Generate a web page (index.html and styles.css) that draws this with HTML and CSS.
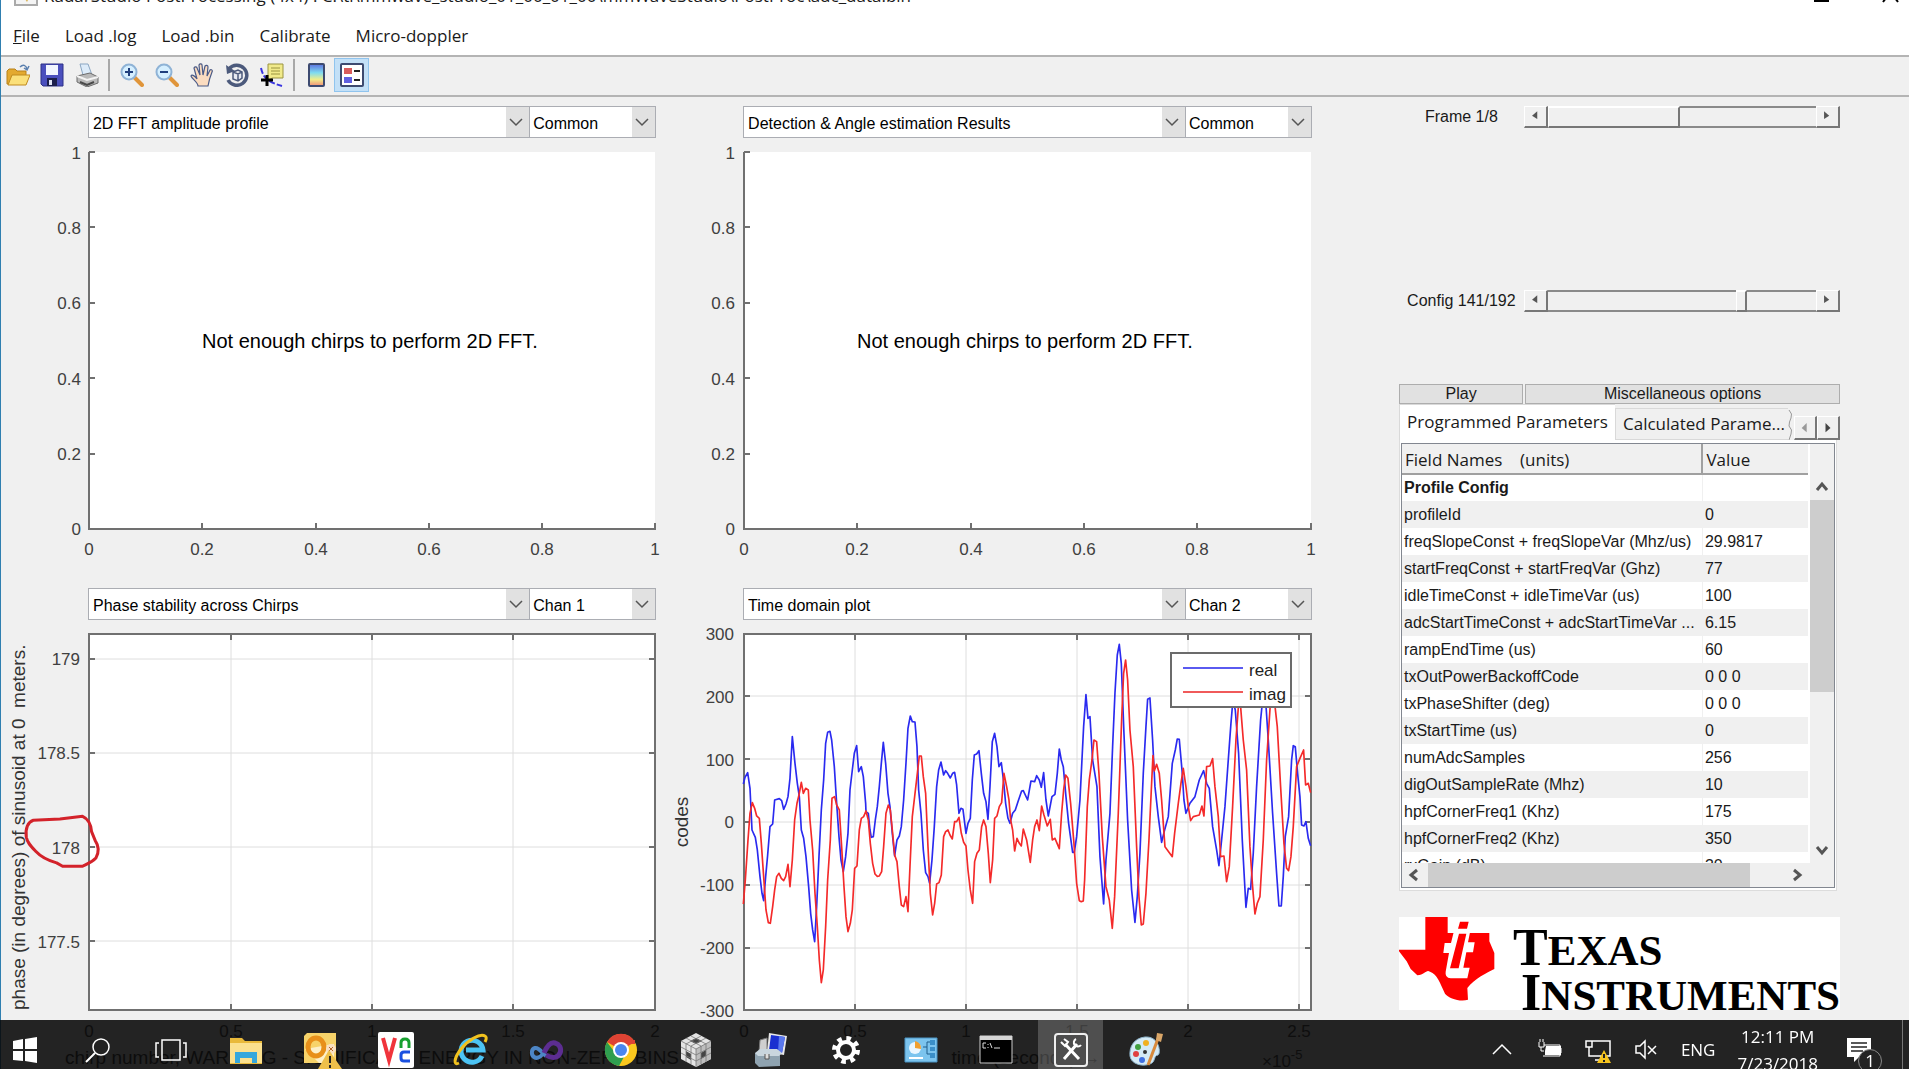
FILE: index.html
```html
<!DOCTYPE html>
<html lang="en">
<head>
<meta charset="utf-8">
<title>RadarStudio PostProcessing</title>
<link rel="stylesheet" href="styles.css">
</head>
<body>
<div class="app">
  <header class="titlebar">
    <svg class="app-icon" viewBox="0 0 24 24"><rect x="1" y="1" width="22" height="22" fill="#f4f4f4" stroke="#aaa" stroke-width="2"/><path d="M9 14l4 6 3-6z" fill="#d9b45a"/></svg>
    <span class="title">RadarStudio PostProcessing (4x4) : C:\ti\mmwave_studio_01_00_01_00\mmWaveStudio\PostProc\adc_data.bin</span>
    <svg class="win-buttons" viewBox="0 0 90 8"><path d="M3 3h15" stroke="#000" stroke-width="2"/><path d="M72 4l3-4M87 4l-3-4" stroke="#000" stroke-width="2"/></svg>
  </header>

  <nav class="menubar">
    <button><u>F</u>ile</button>
    <button>Load .log</button>
    <button>Load .bin</button>
    <button>Calibrate</button>
    <button>Micro-doppler</button>
  </nav>

  <div class="toolbar">
    <button aria-label="Open"><svg viewBox="0 0 24 24"><path d="M1 21V8l2-2h6l2 2h9v13z" fill="#e3a92f" stroke="#b8811a"/><path d="M2 22L6 12h18l-4 10z" fill="#fbe07a" stroke="#c08a1e"/><path d="M14 4c3-3 6-2 7 2m-3-1l3 2 2-4" fill="none" stroke="#5a7fae" stroke-width="1.500"/></svg></button>
    <button aria-label="Save"><svg viewBox="0 0 24 24"><path d="M1 1h22v22H3l-2-2z" fill="#4a4fbd" stroke="#2d3186"/><path d="M6 2h12v10H6z" fill="#f2f6ff"/><path d="M7 15h10v8H7z" fill="#1c1f4c"/><path d="M9 17h3v5H9z" fill="#dfe3f4"/></svg></button>
    <button aria-label="Print"><svg viewBox="0 0 24 24"><path d="M5 1h8l4 11H8z" fill="#dcebf9" stroke="#8ba6c2"/><path d="M2 13l13-3 8 4v6l-11 4-10-5z" fill="#b9b9b9" stroke="#6c6c6c"/><path d="M2 13l10 4 11-3" fill="none" stroke="#f3f3f3" stroke-width="2"/><path d="M5 19l7 3 7-3" fill="none" stroke="#4a4a4a" stroke-width="2"/></svg></button>
    <span class="sep"></span>
    <button aria-label="Zoom in"><svg viewBox="0 0 24 24"><path d="M14 14l8 8" stroke="#e0953a" stroke-width="4" stroke-linecap="round"/><circle cx="9" cy="9" r="7.500" fill="#d5efff" stroke="#8fb3d6" stroke-width="2"/><path d="M9 5v8M5 9h8" stroke="#1f3f7d" stroke-width="2"/></svg></button>
    <button aria-label="Zoom out"><svg viewBox="0 0 24 24"><path d="M14 14l8 8" stroke="#e0953a" stroke-width="4" stroke-linecap="round"/><circle cx="9" cy="9" r="7.500" fill="#d5efff" stroke="#8fb3d6" stroke-width="2"/><path d="M5 9h8" stroke="#1f3f7d" stroke-width="2"/></svg></button>
    <button aria-label="Pan"><svg viewBox="0 0 24 24"><path d="M8 23c0-4-6-7-7-10 1-2 4 0 6 3L4 5c1-2 3-1 3 0l3 7-1-10c1-2 3-1 3 0l1 10 2-9c1-1 3-1 3 1l-1 9 3-6c1-1 3 0 2 2-2 5-3 8-4 14z" fill="#fbdcc0" stroke="#4a5a86" stroke-width="1.200"/></svg></button>
    <button aria-label="Rotate"><svg viewBox="0 0 24 24"><path d="M4 6a10 10 0 1 1-1 11" fill="none" stroke="#4c5a7c" stroke-width="3.500"/><path d="M1 2l1 9 8-3z" fill="#4c5a7c"/><path d="M8 9l5-2 4 2v6l-4 3-5-2zM8 9l5 2 4-2M13 11v6" fill="#e7eaf2" stroke="#4c5a7c" stroke-width="1.500"/></svg></button>
    <button aria-label="Data cursor"><svg viewBox="0 0 24 24"><path d="M1 5c2 9 6 14 21 18" fill="none" stroke="#3a35e0" stroke-width="2" stroke-dasharray="6 2"/><path d="M8 1h15v14H12l-4 3z" fill="#f1ea8a" stroke="#9a9440"/><path d="M11 5h9M11 8h9M11 11h9" stroke="#9a9440"/><path d="M7 12v11M1 17h12" stroke="#000" stroke-width="3"/></svg></button>
    <span class="sep"></span>
    <button aria-label="Colorbar"><svg viewBox="0 0 24 24"><defs><linearGradient id="cb" x2="0" y2="1"><stop offset="0" stop-color="#5c6fe0"/><stop offset=".4" stop-color="#7fdcf0"/><stop offset=".7" stop-color="#f0ee8a"/><stop offset="1" stop-color="#f08c78"/></linearGradient></defs><rect x="4" y="1" width="15" height="22" rx="1" fill="url(#cb)" stroke="#3d4a70" stroke-width="2"/></svg></button>
    <button class="active" aria-label="Legend"><svg viewBox="0 0 24 24"><rect x="1" y="1" width="22" height="22" rx="1" fill="#fff" stroke="#3d4a70" stroke-width="2"/><path d="M4 5h8v6H4z" fill="#d95c5c"/><path d="M4 14h8v6H4z" fill="#6060e0"/><path d="M14 8h6M14 17h6" stroke="#222" stroke-width="2"/></svg></button>
  </div>

  <main class="main">
    <section class="panel">
      <div class="picker">
        <select class="plot" aria-label="Plot 1"><option>2D FFT amplitude profile</option></select>
        <select class="chan" aria-label="Plot 1 channel"><option>Common</option></select>
      </div>
      <svg class="chart" viewBox="1 138 655 450">
        <rect x="89" y="152" width="566" height="377" fill="#fff"/>
        <path class="axis" d="M89 152V529H656M89 152h6M89 227h6M89 303h6M89 378h6M89 454h6M202 529v-6M316 529v-6M429 529v-6M542 529v-6M655 529v-6"/>
        <g class="tick end"><text x="81" y="159">1</text><text x="81" y="234">0.8</text><text x="81" y="309">0.6</text><text x="81" y="385">0.4</text><text x="81" y="460">0.2</text><text x="81" y="535">0</text></g>
        <g class="tick mid"><text x="89" y="555">0</text><text x="202" y="555">0.2</text><text x="316" y="555">0.4</text><text x="429" y="555">0.6</text><text x="542" y="555">0.8</text><text x="655" y="555">1</text></g>
        <text class="note" x="202" y="348">Not enough chirps to perform 2D FFT.</text>
      </svg>
      <div class="picker">
        <select class="plot" aria-label="Plot 3"><option>Phase stability across Chirps</option></select>
        <select class="chan" aria-label="Plot 3 channel"><option>Chan 1</option></select>
      </div>
      <svg class="chart" viewBox="1 620 655 450">
        <rect x="89" y="633" width="566" height="377" fill="#fff"/>
        <path class="gridline" d="M231 633V1010M372 633V1010M513 633V1010M89 659H655M89 753H655M89 847H655M89 941H655"/>
        <path class="axis" d="M89 634H655V1010H89ZM231 634v6M372 634v6M513 634v6M231 1010v-6M372 1010v-6M513 1010v-6M89 659h6M89 753h6M89 847h6M89 941h6M655 659h-6M655 753h-6M655 847h-6M655 941h-6"/>
        <g class="tick end"><text x="80" y="665">179</text><text x="80" y="759">178.5</text><text x="80" y="854">178</text><text x="80" y="948">177.5</text></g>
        <g class="tick mid"><text x="89" y="1037">0</text><text x="231" y="1037">0.5</text><text x="372" y="1037">1</text><text x="513" y="1037">1.5</text><text x="655" y="1037">2</text></g>
        <text class="label mid" x="372" y="1064">chirp number, WARNING - SIGNIFICANT ENERGY IN NON-ZERO BINS</text>
        <text class="label" transform="translate(25 1010) rotate(-90)" xml:space="preserve">phase (in degrees) of sinusoid at 0  meters.</text>
        <g transform="translate(0 780) scale(.333)"><path d="M79 172C75 145 84 126 100 121L180 117L248 109C264 116 273 130 275 155L286 182C298 200 297 218 288 234C275 248 262 252 248 259H188L170 249C140 241 120 228 108 215C92 198 82 188 79 172Z" fill="none" stroke="#d3222a" stroke-width="9" stroke-linejoin="round"/></g>
      </svg>
    </section>

    <section class="panel">
      <div class="picker">
        <select class="plot" aria-label="Plot 2"><option>Detection &amp; Angle estimation Results</option></select>
        <select class="chan" aria-label="Plot 2 channel"><option>Common</option></select>
      </div>
      <svg class="chart" viewBox="656 138 656 450">
        <rect x="744" y="152" width="567" height="377" fill="#fff"/>
        <path class="axis" d="M744 152V529H1312M744 152h6M744 227h6M744 303h6M744 378h6M744 454h6M857 529v-6M971 529v-6M1084 529v-6M1197 529v-6M1311 529v-6"/>
        <g class="tick end"><text x="735" y="159">1</text><text x="735" y="234">0.8</text><text x="735" y="309">0.6</text><text x="735" y="385">0.4</text><text x="735" y="460">0.2</text><text x="735" y="535">0</text></g>
        <g class="tick mid"><text x="744" y="555">0</text><text x="857" y="555">0.2</text><text x="971" y="555">0.4</text><text x="1084" y="555">0.6</text><text x="1197" y="555">0.8</text><text x="1311" y="555">1</text></g>
        <text class="note" x="857" y="348">Not enough chirps to perform 2D FFT.</text>
      </svg>
      <div class="picker">
        <select class="plot" aria-label="Plot 4"><option>Time domain plot</option></select>
        <select class="chan" aria-label="Plot 4 channel"><option>Chan 2</option></select>
      </div>
      <svg class="chart" viewBox="656 620 656 450">
        <rect x="744" y="633" width="567" height="377" fill="#fff"/>
        <path class="gridline" d="M855 633V1010M966 633V1010M1077 633V1010M1188 633V1010M1299 633V1010M744 696H1311M744 759H1311M744 822H1311M744 885H1311M744 948H1311"/>
        <path class="axis" d="M744 634H1311V1010H744ZM855 634v6M966 634v6M1077 634v6M1188 634v6M1299 634v6M855 1010v-6M966 1010v-6M1077 1010v-6M1188 1010v-6M1299 1010v-6M744 696h6M744 759h6M744 822h6M744 885h6M744 948h6M1311 696h-6M1311 759h-6M1311 822h-6M1311 885h-6M1311 948h-6"/>
        <g transform="translate(660 600) scale(.3333)" fill="none" stroke-width="5" stroke-linejoin="round">
          <polyline stroke="#2a2af0" points="250,552 255,532 263,518 270,565 276,690 286,712 292,750 300,830 306,880 311,902 317,830 323,765 330,680 338,672 344,600 358,596 365,602 371,628 378,612 384,590 390,535 397,410 405,490 412,550 418,590 424,690 431,715 438,770 446,860 452,940 458,990 464,1025 470,920 477,770 484,630 491,540 497,430 503,397 510,394 515,420 523,500 530,610 537,710 543,780 550,815 557,770 564,700 570,570 577,510 583,460 590,437 596,515 604,500 610,530 617,610 618,635 625,640 630,690 634,712 640,710 646,660 652,620 658,560 664,490 670,427 677,490 684,580 690,620 697,700 704,768 711,720 718,708 724,680 731,600 738,490 744,385 751,348 757,365 765,366 771,440 776,570 783,640 790,750 797,818 804,830 809,850 816,780 823,680 830,560 836,510 843,486 851,525 857,512 863,520 871,534 878,520 884,517 890,555 897,640 903,625 909,628 918,700 924,670 931,655 937,540 943,465 950,462 957,452 964,520 971,580 978,605 984,658 990,560 997,425 1004,400 1011,440 1017,500 1024,488 1031,545 1037,610 1044,655 1050,670 1058,640 1066,630 1074,605 1085,573 1090,572 1103,600 1113,543 1124,545 1130,527 1138,540 1144,562 1151,518 1158,600 1165,648 1176,590 1185,583 1192,520 1198,447 1204,480 1210,500 1218,590 1226,670 1238,757 1243,757 1250,710 1260,600 1265,500 1271,380 1278,284 1284,355 1290,350 1298,480 1311,560 1320,770 1331,912 1338,780 1350,640 1358,440 1365,280 1372,165 1378,133 1384,190 1392,400 1403,660 1415,870 1425,967 1432,890 1440,760 1450,520 1458,380 1463,298 1470,294 1478,420 1485,560 1495,650 1505,727 1514,690 1525,650 1537,490 1546,450 1552,417 1558,418 1567,520 1572,600 1578,640 1590,610 1605,590 1618,540 1631,512 1640,550 1648,565 1658,680 1670,750 1677,797 1685,720 1695,620 1705,480 1713,370 1719,300 1726,330 1736,460 1747,720 1758,922 1765,865 1772,868 1780,760 1790,560 1802,360 1810,280 1817,300 1825,420 1838,640 1850,820 1857,918 1864,918 1870,830 1876,710 1886,650 1895,480 1900,437 1906,440 1913,520 1920,590 1925,675 1932,678 1938,665 1945,715 1952,737"/>
          <polyline stroke="#f42a2a" points="250,912 256,840 264,720 270,640 277,608 284,625 290,648 298,655 304,730 311,830 318,930 325,968 331,970 338,920 344,870 350,830 357,820 364,835 371,842 377,830 384,793 390,860 397,780 404,660 411,610 417,585 424,547 430,580 437,565 445,570 450,660 458,750 465,880 472,980 478,1080 484,1148 490,1110 497,980 503,840 511,720 516,595 524,590 530,615 538,630 545,740 552,860 558,950 564,995 571,970 577,930 584,805 591,798 598,690 604,655 611,650 618,633 625,660 631,730 638,790 645,822 652,829 658,828 665,815 671,740 678,640 685,615 691,630 698,700 704,765 711,785 718,860 724,915 731,920 738,890 744,935 750,800 757,650 764,590 771,530 778,468 784,468 790,530 797,580 804,740 811,880 818,945 824,910 830,852 837,848 844,825 851,710 857,695 864,690 870,705 877,717 884,665 890,665 897,652 904,700 911,727 918,738 924,810 931,870 938,910 944,785 951,760 958,750 965,680 971,660 978,680 985,760 991,848 998,780 1004,655 1011,648 1018,620 1025,608 1032,520 1040,560 1047,600 1052,660 1058,690 1064,753 1071,715 1078,730 1084,738 1090,687 1100,720 1111,787 1118,720 1124,680 1131,660 1138,692 1145,618 1152,645 1162,678 1171,658 1177,720 1185,715 1198,746 1205,640 1211,570 1217,525 1224,535 1232,610 1242,730 1250,850 1258,902 1264,905 1270,903 1274,840 1282,620 1288,540 1296,480 1302,420 1310,425 1317,520 1327,710 1338,860 1348,900 1357,985 1364,890 1375,640 1385,360 1391,220 1397,180 1403,240 1410,390 1420,500 1430,740 1437,890 1444,975 1450,972 1458,880 1467,720 1475,550 1479,467 1483,513 1490,493 1498,520 1505,600 1515,740 1537,770 1544,700 1555,610 1563,550 1570,505 1578,560 1585,620 1592,662 1600,650 1618,645 1626,618 1632,648 1640,500 1650,498 1658,476 1665,560 1675,650 1682,770 1692,768 1700,845 1708,800 1718,620 1728,420 1736,310 1742,320 1750,420 1760,510 1770,740 1778,860 1785,942 1792,910 1800,890 1810,720 1820,480 1832,300 1842,290 1852,380 1862,560 1872,730 1880,805 1886,812 1893,770 1900,680 1910,500 1920,475 1931,450 1937,555 1945,550 1952,578"/>
        </g>
        <rect x="1171" y="653" width="120" height="54" fill="#fff" stroke="#6b6b6b" stroke-width="2"/>
        <path d="M1183 668h60" stroke="#5a5af0" stroke-width="2"/><path d="M1183 692h60" stroke="#f05a5a" stroke-width="2"/>
        <text class="legend" x="1249" y="676">real</text><text class="legend" x="1249" y="700">imag</text>
        <g class="tick end"><text x="734" y="640">300</text><text x="734" y="703">200</text><text x="734" y="766">100</text><text x="734" y="828">0</text><text x="734" y="891">-100</text><text x="734" y="954">-200</text><text x="734" y="1017">-300</text></g>
        <g class="tick mid"><text x="744" y="1037">0</text><text x="855" y="1037">0.5</text><text x="966" y="1037">1</text><text x="1077" y="1037">1.5</text><text x="1188" y="1037">2</text><text x="1299" y="1037">2.5</text></g>
        <text class="label mid" x="1026" y="1064">time (seconds) →</text>
        <text class="tick" x="1262" y="1067">×10<tspan class="sup" dy="-8">-5</tspan></text>
        <text class="label mid" transform="translate(688 822) rotate(-90)">codes</text>
      </svg>
    </section>

    <aside class="side">
      <div class="slider-row">
        <label for="frame">Frame 1/8</label>
        <div class="slider">
          <button aria-label="Previous frame"><svg viewBox="0 0 24 22"><path d="M14 5v9l-6-4z" fill="#555"/></svg></button>
          <input class="frame" id="frame" type="range" min="1" max="8" value="1">
          <button aria-label="Next frame"><svg viewBox="0 0 24 22"><path d="M8 5v9l6-4z" fill="#555"/></svg></button>
        </div>
      </div>
      <div class="slider-row">
        <label for="config">Config 141/192</label>
        <div class="slider">
          <button aria-label="Previous config"><svg viewBox="0 0 24 22"><path d="M14 5v9l-6-4z" fill="#555"/></svg></button>
          <input id="config" type="range" min="1" max="192" value="141">
          <button aria-label="Next config"><svg viewBox="0 0 24 22"><path d="M8 5v9l6-4z" fill="#555"/></svg></button>
        </div>
      </div>
      <div class="actions">
        <button>Play</button>
        <button>Miscellaneous options</button>
      </div>
      <div class="tabs">
        <button class="tab current">Programmed Parameters</button>
        <button class="tab">Calculated Parame...</button>
        <svg class="torn" viewBox="0 0 6 30"><path d="M1 0q4 4 2 8t-2 8q4 4 2 8l-2 6" fill="none" stroke="#999"/></svg>
        <button class="step" aria-label="Scroll tabs left"><svg viewBox="0 0 24 24"><path d="M14 6v11l-6-5z" fill="#999"/></svg></button>
        <button class="step" aria-label="Scroll tabs right"><svg viewBox="0 0 24 24"><path d="M9 6v11l6-5z" fill="#444"/></svg></button>
      </div>
      <div class="pane">
        <div class="grid-box">
          <div class="viewport">
            <table>
              <thead><tr><th>Field Names &nbsp;&nbsp; (units)</th><th>Value</th></tr></thead>
              <tbody>
                <tr class="group"><td>Profile Config</td><td></td></tr>
                <tr><td>profileId</td><td>0</td></tr>
                <tr><td>freqSlopeConst + freqSlopeVar (Mhz/us)</td><td>29.9817</td></tr>
                <tr><td>startFreqConst + startFreqVar (Ghz)</td><td>77</td></tr>
                <tr><td>idleTimeConst + idleTimeVar (us)</td><td>100</td></tr>
                <tr><td>adcStartTimeConst + adcStartTimeVar ...</td><td>6.15</td></tr>
                <tr><td>rampEndTime (us)</td><td>60</td></tr>
                <tr><td>txOutPowerBackoffCode</td><td>0 0 0</td></tr>
                <tr><td>txPhaseShifter (deg)</td><td>0 0 0</td></tr>
                <tr><td>txStartTime (us)</td><td>0</td></tr>
                <tr><td>numAdcSamples</td><td>256</td></tr>
                <tr><td>digOutSampleRate (Mhz)</td><td>10</td></tr>
                <tr><td>hpfCornerFreq1 (Khz)</td><td>175</td></tr>
                <tr><td>hpfCornerFreq2 (Khz)</td><td>350</td></tr>
                <tr><td>rxGain (dB)</td><td>30</td></tr>
              </tbody>
            </table>
          </div>
          <div class="vscroll">
            <svg viewBox="0 0 24 26"><path d="M7 16l5-6 5 6" fill="none" stroke="#555" stroke-width="3"/></svg>
            <span class="thumb"></span>
            <svg viewBox="0 0 24 26"><path d="M7 10l5 6 5-6" fill="none" stroke="#555" stroke-width="3"/></svg>
          </div>
          <div class="hscroll">
            <svg viewBox="0 0 26 24"><path d="M15 7l-6 5 6 5" fill="none" stroke="#555" stroke-width="3"/></svg>
            <span class="thumb"></span>
            <svg viewBox="0 0 26 24"><path d="M10 7l6 5-6 5" fill="none" stroke="#555" stroke-width="3"/></svg>
          </div>
        </div>
      </div>
      <div class="logo">
        <svg viewBox="57 832 288 252">
          <path d="M136 832H203V880H328V905L343 940V988C320 1000 285 1015 262 1045L264 1080C240 1088 205 1075 195 1062C180 1030 172 1003 150 996C138 988 135 1006 112 1007L92 988L80 965L57 935V930H136Z" fill="#f00"/>
          <path d="M237 843H268L262 870H230ZM221 878H270L264 908H284L279 938H259L250 984H269L262 1016H212Q194 1014 197 996L207 940H190L194 910H213Z" fill="#fff"/>
          <path d="M240 846H266L261 867H234ZM237 882H259L236 986H210Z" fill="#f00"/>
        </svg>
        <div class="logo-text"><span>T<small>EXAS</small></span><span>I<small>NSTRUMENTS</small></span></div>
      </div>
    </aside>
  </main>
</div>

<footer class="taskbar">
  <div class="system">
    <button aria-label="Start"><svg viewBox="0 0 36 36"><path d="M6 9l10-2v10H6zM18 7l12-2v12H18zM6 19h10v10L6 28zM18 19h12v12l-12-2z" fill="#fff"/></svg></button>
    <button aria-label="Search"><svg viewBox="0 0 36 36"><circle cx="21" cy="15" r="8" fill="none" stroke="#fff" stroke-width="1.500"/><path d="M15 21L6 30" stroke="#fff" stroke-width="2"/></svg></button>
    <button aria-label="Task view"><svg viewBox="0 0 36 36"><path d="M9 8h18v20H9zM6 11H3v14h3M30 11h3v14h-3" fill="none" stroke="#fff" stroke-width="1.500"/></svg></button>
  </div>
  <div class="apps">
    <button aria-label="File Explorer"><svg viewBox="0 0 36 36"><path d="M2 6h12l3 3h17v23H2z" fill="#e9b93a"/><path d="M2 11h32v20H2z" fill="#fbe08e"/><path d="M7 31V20h22v11h-5v-5H12v5z" fill="#35a7dc"/></svg></button>
    <button aria-label="Outlook"><svg viewBox="0 0 36 36"><path d="M4 1h29v30H1V4z" fill="#f7d36a"/><path d="M2 17l14 14h15V12z" fill="#fdf0c8"/><ellipse cx="13" cy="15" rx="8" ry="9" fill="none" stroke="#e8901a" stroke-width="5"/><circle cx="28" cy="17" r="5" fill="#f9e0c0"/><path d="M26 15l4 4M30 15l-4 4" stroke="#b5642a" stroke-width="1"/><path d="M26 18l13 19H15z" fill="#eec04a"/><path d="M27 24v7M27 33v3" stroke="#222" stroke-width="2"/></svg></button>
    <button aria-label="VNC Viewer"><svg viewBox="0 0 36 36"><rect width="36" height="36" rx="2" fill="#fff"/><path d="M5 6l6 22 6-22" fill="none" stroke="#f0343c" stroke-width="4"/><path d="M23 16v-5q0-4 4-4t4 4v5" fill="none" stroke="#18a030" stroke-width="3"/><path d="M32 20h-6q-3 0-3 3v3q0 3 3 3h6" fill="none" stroke="#1a50e0" stroke-width="3"/></svg></button>
    <button aria-label="Internet Explorer"><svg viewBox="0 0 36 36"><path d="M29 24a11 11 0 1 1 1-6H13" fill="none" stroke="#4cc3f4" stroke-width="5"/><path d="M6 31c-6 3-5-5 2-14S27 1 32 4c2 1 1 4 0 6" fill="none" stroke="#f2c21e" stroke-width="3"/></svg></button>
    <button aria-label="Visual Studio"><svg viewBox="0 0 36 36"><path d="M17 19c-4 6-8 8-11 6s-3-8 1-9 7 5 11 8" fill="none" stroke="#4d86c6" stroke-width="4"/><path d="M16 21c3-7 7-11 11-10s7 5 5 10-8 6-14 2" fill="none" stroke="#5c2d91" stroke-width="5"/></svg></button>
    <button aria-label="Chrome"><svg viewBox="0 0 36 36"><circle cx="18" cy="18" r="16" fill="#fbc81e"/><path d="M18 18L4 10a16 16 0 0 1 28 0z" fill="#de4334"/><path d="M18 18h-8L4 10a16 16 0 0 0 12 24l6-11z" fill="#2f9e4f"/><path d="M18 10h14" stroke="#de4334" stroke-width="4"/><circle cx="18" cy="18" r="8" fill="#fff"/><circle cx="18" cy="18" r="6" fill="#4a86ee"/></svg></button>
    <button aria-label="Cube"><svg viewBox="0 0 36 36"><path d="M18 1l15 8v18l-15 8-15-8V9z" fill="#e4e4e4"/><path d="M18 17l15-8v18l-15 8z" fill="#bdbdbd"/><path d="M18 6l6 3-6 3-6-3zM8 19l5 3v6l-5-3zM23 21l5-3v6l-5 3z" fill="#444"/><path d="M3 9l15 8 15-8M18 17v18M8 6l15 8M13 4l15 8M23 4L8 12M28 6L13 14M3 15l15 8 15-8M3 21l15 8 15-8M8 12v18M13 14v18M23 14v18M28 12v18" fill="none" stroke="#777" stroke-width=".8"/></svg></button>
    <button aria-label="Server manager"><svg viewBox="0 0 36 36"><path d="M7 8l7-2v14H6z" fill="#cfcfcf" stroke="#777"/><path d="M16 1l18 3-3 19-17-3z" fill="#e8e8e8"/><path d="M18 3l14 2-3 16-13-3z" fill="#1a2fd0"/><path d="M26 4l6 1-3 16-4-1z" fill="#5a78ee"/><path d="M2 21h25v13l-21 1-4-4z" fill="#8fa3b0"/><path d="M2 21l5-4h17l5 4-3 3H5z" fill="#c9d6de"/><path d="M12 22v5h4v-5" fill="#ddd" stroke="#555"/></svg></button>
    <button aria-label="Settings"><svg viewBox="0 0 36 36"><circle cx="18" cy="18" r="8" fill="none" stroke="#fff" stroke-width="4"/><circle cx="18" cy="18" r="11.500" fill="none" stroke="#fff" stroke-width="5" stroke-dasharray="4.500 4.530"/></svg></button>
    <button aria-label="Control Panel"><svg viewBox="0 0 36 36"><path d="M2 6h32v24H2z" fill="#7cc4ee" stroke="#4a94c4"/><circle cx="12" cy="16" r="6" fill="#e9f6ff"/><path d="M12 16V9a7 7 0 0 1 6 8z" fill="#f0a030"/><path d="M20 15h4M24 10v12M24 10h3M24 22h3" stroke="#215f8c" fill="none"/><path d="M27 8h5v5h-5zM27 15h5v4h-5zM27 21h5v5h-5z" fill="#3b8fc8"/><path d="M6 26h14" stroke="#fff" stroke-width="2"/></svg></button>
    <button aria-label="Command Prompt"><svg viewBox="0 0 36 36"><path d="M2 4h32v27H2z" fill="#000" stroke="#ccc"/><path d="M2 4h32v4H2z" fill="#d5d5d5"/><path d="M8 11H5v5h3M10 12v1M10 15v1M12 11l2 5M16 16h6" fill="none" stroke="#ddd"/></svg></button>
    <button class="active" aria-label="Tools"><svg viewBox="0 0 36 36"><rect x="2" y="2" width="32" height="32" rx="3" fill="#4d4d4d" stroke="#eee" stroke-width="2"/><path d="M12 12l14 15M24 12L11 27" stroke="#fff" stroke-width="3"/><path d="M23 7a4 4 0 1 0 5 6M8 10l4 4 3-4-4-3" fill="none" stroke="#fff" stroke-width="2"/></svg></button>
    <button aria-label="Paint"><svg viewBox="0 0 36 36"><path d="M17 5C6 6 1 15 2 24c1 8 12 11 20 8 6-2 3-8 8-9 3-1 2-19-13-18z" fill="#d4eaf6" stroke="#8fb5cc"/><circle cx="10" cy="15" r="3" fill="#40a040"/><circle cx="18" cy="11" r="3" fill="#f0b020"/><circle cx="8" cy="22" r="3" fill="#e04040"/><circle cx="14" cy="28" r="3" fill="#4070e0"/><circle cx="17" cy="20" r="2" fill="#333"/><path d="M31 4L20 33" stroke="#d88a3c" stroke-width="3"/><path d="M28 8l1-7 6 1-2 8z" fill="#d9a668"/></svg></button>
  </div>
  <div class="tray">
    <svg class="glyph" viewBox="0 0 26 26"><path d="M4 17l9-9 9 9" fill="none" stroke="#fff" stroke-width="1.500"/></svg>
    <svg class="glyph" viewBox="0 0 26 26"><path d="M9 9h15v9H8v-4" fill="#fff"/><path d="M7 8h16v11H6M24 11v5M2 5v5h5V5M3 5V2M6 5V2M4 10v4h3" fill="none" stroke="#fff"/></svg>
    <svg class="glyph" viewBox="0 0 26 26"><path d="M7 4h18v15H4v-9M1 4h6v6H1zM10 23h6v-4" fill="none" stroke="#fff" stroke-width="1.500"/><path d="M19 13l7 13H12z" fill="#f7c51e"/><path d="M19 17v4M19 23v2" stroke="#222" stroke-width="2"/></svg>
    <svg class="glyph" viewBox="0 0 26 26"><path d="M3 9h4l5-5v17l-5-5H3zM15 9l8 8M23 9l-8 8" fill="none" stroke="#fff" stroke-width="1.500"/></svg>
    <span class="lang">ENG</span>
    <span class="clock"><span>12:11 PM</span><span>7/23/2018</span></span>
    <span class="notify"><svg viewBox="0 0 26 26"><path d="M1 1h24v19H13l-5 5v-5H1z" fill="#fff"/><path d="M5 6h16M5 10h16M5 14h12" stroke="#232323" stroke-width="1.500"/></svg><span class="badge">1</span></span>
  </div>
  <span class="desktop"></span>
</footer>
</body>
</html>
```

FILE: styles.css
```css
* { box-sizing: border-box; }

body {
  margin: 0;
  height: 100vh;
  overflow: hidden;
  background: #f0f0f0;
  color: #1a1a1a;
  font: 16px/20px "Liberation Sans", Arial, sans-serif;
}

button, select, input { font: inherit; color: inherit; margin: 0; }
button { border: 0; padding: 0; background: none; }
svg { display: block; }

.app { border-left: 1px solid #2f7fb0; }

.titlebar {
  display: flex;
  align-items: flex-end;
  height: 6px;
  padding: 0 8px 0 13px;
  overflow: hidden;
  background: #fff;
}
.app-icon { width: 24px; height: 24px; flex: none; }
.title {
  flex: 1;
  padding-left: 6px;
  white-space: nowrap;
  font: 17px/20px "Open Sans", sans-serif;
}
.win-buttons { width: 90px; height: 8px; flex: none; }

.menubar {
  display: flex;
  gap: 25px;
  height: 49px;
  padding: 6px 12px 0;
  align-items: flex-start;
  background: #fff;
  font: 17px/24px "Open Sans", sans-serif;
}
.menubar button { line-height: 48px; }

.toolbar {
  display: flex;
  align-items: center;
  height: 42px;
  padding-bottom: 3px;
  border-top: 2px solid #b4b4b4;
  border-bottom: 2px solid #b4b4b4;
}
.toolbar button { display: grid; place-items: center; width: 35px; height: 34px; }
.toolbar button:first-child { width: 33px; }
.toolbar svg { width: 24px; height: 24px; }
.toolbar .active { background: #c3e0f7; border: 1px solid #90c4ee; }
.sep { width: 2px; height: 32px; margin: 0 4px; background: #a8a8a8; }

.main {
  display: grid;
  grid-template-columns: minmax(0, 655fr) minmax(0, 656fr) minmax(0, 597fr);
  padding-top: 9px;
}

.picker { display: grid; grid-template-columns: 442fr 127fr; padding-left: 13.28%; }
.picker select {
  width: 100%;
  height: 32px;
  padding: 3px 24px 0 4px;
  border: 1px solid #abadb3;
  border-radius: 0;
  appearance: none;
  color: #000;
  background: #fff url("data:image/svg+xml,%3Csvg xmlns='http://www.w3.org/2000/svg' width='23' height='30'%3E%3Cpath fill='%23e1e1e1' d='M0 0h23v30H0z'/%3E%3Cpath d='M4 12l6 6 6-6' fill='none' stroke='%23555' stroke-width='1.500'/%3E%3C/svg%3E") no-repeat right center;
}
.picker .plot { border-right: 0; }
.picker .chan { padding-left: 3px; }

.chart { width: 100%; height: auto; overflow: visible; }
.axis { fill: none; stroke: #707070; stroke-width: 2; }
.gridline { fill: none; stroke: #dedede; stroke-width: 1; }
.tick { font-size: 17px; fill: #404040; }
.end { text-anchor: end; }
.mid { text-anchor: middle; }
.note { font-size: 20px; fill: #000; }
.label { font-size: 19px; fill: #333; }
.legend { font-size: 17px; fill: #222; }
.sup { font-size: 13px; }

.side { display: flex; flex-direction: column; padding: 0 69px 0 87px; }

.slider-row {
  display: grid;
  grid-template-columns: 125fr 317fr;
  align-items: center;
  height: 22px;
  margin-bottom: 162px;
}
.slider-row + .slider-row { margin-bottom: 72px; }
.slider-row label { text-align: center; }
.slider { display: flex; height: 22px; }
.slider button {
  flex: none;
  width: 24px;
  border: solid;
  border-width: 1px 2px 2px 1px;
  border-color: #fff #777 #777 #fff;
}
.slider button svg { width: 100%; height: 100%; }
.slider input {
  flex: 1;
  min-width: 0;
  height: 22px;
  appearance: none;
  background: #f0f0f0;
  border: solid #8a8a8a;
  border-width: 2px 0;
}
.slider input::-webkit-slider-thumb {
  appearance: none;
  width: 11px;
  height: 22px;
  background: #f0f0f0;
  border: solid;
  border-width: 2px 2px 2px 1px;
  border-color: #fff #777 #777 #fff;
}
.slider .frame::-webkit-slider-thumb { width: 132px; }

.actions { display: grid; grid-template-columns: 124fr 314fr; gap: 2px; }
.actions button { height: 20px; line-height: 18px; background: #e1e1e1; border: 1px solid #adadad; }

.tabs { display: flex; align-items: flex-end; font: 17px/24px "Open Sans", sans-serif; }
.tab {
  flex: 172 1 0;
  min-width: 0;
  height: 32px;
  padding-left: 4px;
  overflow: hidden;
  white-space: nowrap;
  border: 1px solid #d9d9d9;
  border-right: 0;
}
.tab.current { flex-grow: 220; height: 36px; padding: 0 0 2px; background: #fff; border-bottom: 0; }
.torn { flex: none; width: 6px; height: 30px; }
.step {
  flex: none;
  width: 23px;
  height: 24px;
  border: solid;
  border-width: 1px 2px 2px 1px;
  border-color: #fff #777 #777 #fff;
}

.pane { margin-right: 3px; padding: 3px 1px 2px; background: #fff; border: 1px solid #dcdcdc; border-top: 0; }
.grid-box {
  display: grid;
  grid-template-columns: minmax(0, 1fr) 24px;
  border: 1px solid #828790;
  background: #f0f0f0;
}
.viewport { height: 419px; overflow: hidden; border-right: 2px solid #fff; }
table { width: 100%; border-collapse: collapse; table-layout: fixed; background: #fff; }
th, td { padding: 0 3px; overflow: hidden; white-space: nowrap; text-align: left; }
th {
  height: 30px;
  padding-top: 3px;
  background: #f0f0f0;
  border-bottom: 2px solid #a0a0a0;
  font: 17px/24px "Open Sans", sans-serif;
}
th:first-child { width: 74%; border-right: 2px solid #a0a0a0; }
td { height: 27px; padding: 0 2px; }
td:first-child { border-right: 1px solid #f0f0f0; }
tbody tr:nth-child(even) { background: #f0f0f0; }
.group { font-weight: bold; }

.vscroll { display: flex; flex-direction: column; padding-top: 30px; }
.vscroll svg { width: 24px; height: 26px; }
.vscroll .thumb { height: 192px; margin-bottom: auto; background: #cdcdcd; }
.hscroll { display: flex; grid-column: 1 / -1; height: 24px; padding-right: 24px; }
.hscroll svg { width: 26px; height: 24px; flex: none; }
.hscroll .thumb { width: 79%; margin-right: auto; background: #cdcdcd; }

.logo { display: flex; justify-content: space-between; height: 93px; margin-top: 26px; background: #fff; overflow: hidden; }
.logo > svg { width: 96px; height: 84px; flex: none; }
.logo-text {
  display: flex;
  flex-direction: column;
  padding-top: 10px;
  color: #000;
  font: bold 52px/42px "Liberation Serif", "Times New Roman", serif;
}
.logo-text small { font-size: 43px; }
.logo-text span + span { padding-left: 8px; }

.taskbar {
  position: fixed;
  left: 0;
  right: 0;
  bottom: -11px;
  display: flex;
  height: 60px;
  background: rgba(8, 8, 8, 0.885);
  color: #fff;
  font: 17px/28px "Open Sans", sans-serif;
}
.system, .apps, .tray { display: flex; }
.system { margin: 0 1px 0 -12px; }
.system button { width: 73px; }
.apps button { width: 75px; padding: 0 5px; }
.taskbar button { display: grid; place-items: center; }
.taskbar button svg { width: 36px; height: 36px; overflow: visible; }
.apps .active { background: rgba(255, 255, 255, 0.2) content-box; }
.tray { margin-left: auto; align-items: center; gap: 22px; }
.glyph { width: 26px; height: 26px; }
.clock { display: flex; flex-direction: column; align-items: center; line-height: 27px; }
.notify { position: relative; margin-left: 6px; }
.notify svg { width: 26px; height: 26px; }
.badge {
  position: absolute;
  left: 12px;
  top: 12px;
  width: 24px;
  height: 24px;
  border: 1px solid #888;
  border-radius: 50%;
  background: #232323;
  line-height: 22px;
  text-align: center;
}
.desktop { width: 7px; margin-left: 30px; border-left: 1px solid #777; }
```
